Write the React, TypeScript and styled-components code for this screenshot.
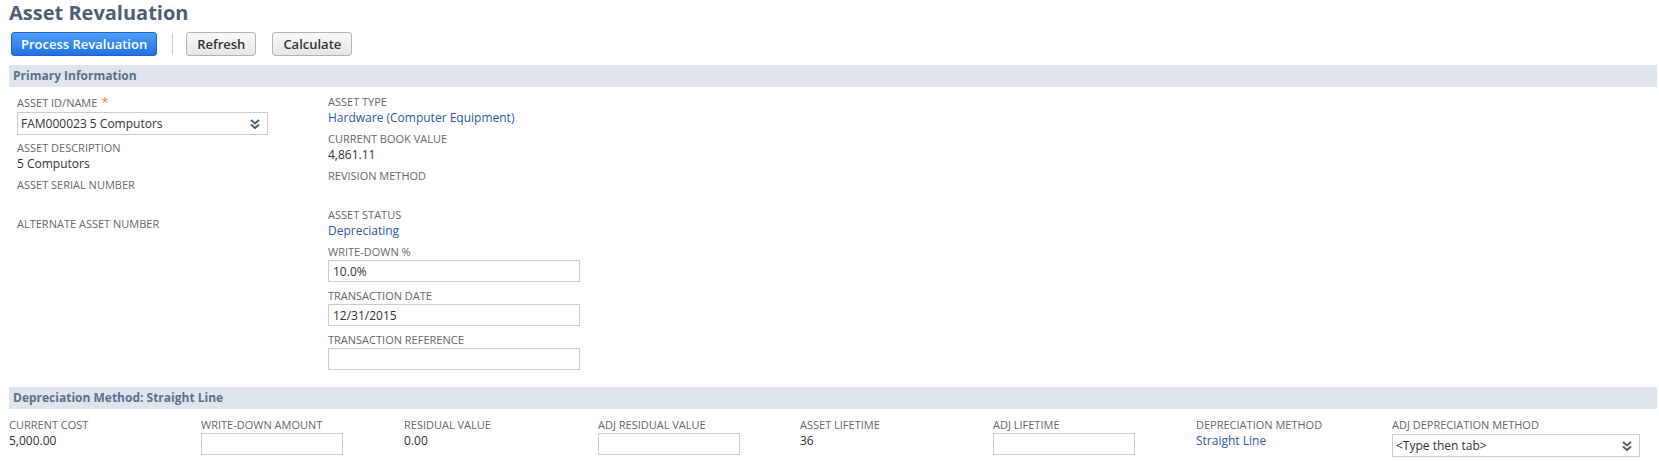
import React from 'react';
import styled, { createGlobalStyle } from 'styled-components';

const GlobalStyle = createGlobalStyle`
    body {
        margin: 0;
        background: #ffffff;
        font-family: "Open Sans", "DejaVu Sans", sans-serif;
        color: #333333;
    }
`;

const Page = styled.div`
    padding: 0 2px 0 9px;
`;

const Title = styled.h1`
    margin: 0;
    font-size: 20px;
    line-height: 26px;
    font-weight: 700;
    color: #4d5e77;
`;

const Toolbar = styled.div`
    display: flex;
    align-items: center;
    margin-top: 6px;
    height: 24px;
    padding-left: 2px;
`;

const Button = styled.button<{ primary?: boolean }>`
    height: 24px;
    padding: 0 ${props => (props.primary ? '9px' : '10px')};
    margin-right: ${props => (props.primary ? '15px' : '16px')};
    border-radius: 3px;
    font-family: "Open Sans", sans-serif;
    font-size: 13px;
    font-weight: 600;
    cursor: pointer;
    border: 1px solid ${props => (props.primary ? '#1b64cf' : '#b3b3b3')};
    color: ${props => (props.primary ? '#ffffff' : '#333333')};
    background: ${props =>
        props.primary
            ? 'linear-gradient(#4da0f7, #1f72e3)'
            : 'linear-gradient(#fafafa, #e5e5e5)'};
`;

const Separator = styled.span`
    width: 1px;
    height: 22px;
    background: #cccccc;
    margin-right: 13px;
`;

const SectionBar = styled.div<{ gap: number }>`
    margin-top: ${props => props.gap}px;
    height: 22px;
    line-height: 22px;
    background: #dfe5ef;
    padding-left: 4px;
    font-size: 12px;
    font-weight: 700;
    color: #5b6f8e;
`;

const PrimaryGrid = styled.div`
    display: grid;
    grid-template-columns: 311px 260px;
    padding: 7px 0 0 8px;
`;

const Column = styled.div`
    display: flex;
    flex-direction: column;
`;

const Field = styled.div<{ spaced?: boolean }>`
    margin-bottom: ${props => (props.spaced ? '6px' : '5px')};
`;

const Label = styled.div`
    font-size: 11px;
    line-height: 16px;
    color: #686868;
    white-space: nowrap;
`;

const Required = styled.span`
    color: #e8892e;
    font-size: 13px;
    margin-left: 4px;
`;

const Value = styled.div<{ link?: boolean }>`
    font-size: 12px;
    line-height: 16px;
    min-height: 18px;
    color: ${props => (props.link ? '#2a5aa6' : '#333333')};
    white-space: nowrap;
    &:not(:empty) {
        min-height: 16px;
    }
`;

const TextInput = styled.input<{ w: number }>`
    display: block;
    box-sizing: border-box;
    width: ${props => props.w}px;
    height: 22px;
    margin: 0;
    padding: 0 4px;
    border: 1px solid #cccccc;
    font-family: "Open Sans", sans-serif;
    font-size: 12px;
    color: #333333;
    outline: none;
`;

const SelectBox = styled.div<{ w: number }>`
    box-sizing: border-box;
    width: ${props => props.w}px;
    height: 23px;
    margin-top: 1px;
    border: 1px solid #cccccc;
    display: flex;
    align-items: center;
    justify-content: space-between;
    padding: 0 7px 0 3px;
    font-size: 12px;
    color: #333333;
`;

const BottomRow = styled.div`
    display: grid;
    grid-template-columns: 192px 203px 194px 202px 193px 203px 196px 260px;
    padding-top: 8px;
`;

const Chevrons = () => (
    <svg width="10" height="10" viewBox="0 0 10 10">
        <path d="M1 1 L5 4.5 L9 1" fill="none" stroke="#4e6079" strokeWidth="2" />
        <path d="M1 5.5 L5 9 L9 5.5" fill="none" stroke="#4e6079" strokeWidth="2" />
    </svg>
);

const depreciation = [
    { label: 'CURRENT COST', value: '5,000.00' },
    { label: 'WRITE-DOWN AMOUNT', input: true },
    { label: 'RESIDUAL VALUE', value: '0.00' },
    { label: 'ADJ RESIDUAL VALUE', input: true },
    { label: 'ASSET LIFETIME', value: '36' },
    { label: 'ADJ LIFETIME', input: true },
    { label: 'DEPRECIATION METHOD', value: 'Straight Line', link: true },
    { label: 'ADJ DEPRECIATION METHOD', select: '<Type then tab>' },
];

const App: React.FC = () => {
    return (
        <Page>
            <GlobalStyle />
            <Title>Asset Revaluation</Title>
            <Toolbar>
                <Button primary>Process Revaluation</Button>
                <Separator />
                <Button>Refresh</Button>
                <Button>Calculate</Button>
            </Toolbar>

            <SectionBar gap={9}>Primary Information</SectionBar>
            <PrimaryGrid>
                <Column>
                    <Field>
                        <Label>
                            ASSET ID/NAME<Required>*</Required>
                        </Label>
                        <SelectBox w={251}>
                            <span>FAM000023 5 Computors</span>
                            <Chevrons />
                        </SelectBox>
                    </Field>
                    <Field>
                        <Label>ASSET DESCRIPTION</Label>
                        <Value>5 Computors</Value>
                    </Field>
                    <Field>
                        <Label>ASSET SERIAL NUMBER</Label>
                        <Value />
                    </Field>
                    <Field>
                        <Label>ALTERNATE ASSET NUMBER</Label>
                    </Field>
                </Column>
                <Column>
                    <Field>
                        <Label>ASSET TYPE</Label>
                        <Value link>Hardware (Computer Equipment)</Value>
                    </Field>
                    <Field>
                        <Label>CURRENT BOOK VALUE</Label>
                        <Value>4,861.11</Value>
                    </Field>
                    <Field>
                        <Label>REVISION METHOD</Label>
                        <Value />
                    </Field>
                    <Field>
                        <Label>ASSET STATUS</Label>
                        <Value link>Depreciating</Value>
                    </Field>
                    <Field spaced>
                        <Label>WRITE-DOWN %</Label>
                        <TextInput w={252} defaultValue="10.0%" />
                    </Field>
                    <Field spaced>
                        <Label>TRANSACTION DATE</Label>
                        <TextInput w={252} defaultValue="12/31/2015" />
                    </Field>
                    <Field>
                        <Label>TRANSACTION REFERENCE</Label>
                        <TextInput w={252} />
                    </Field>
                </Column>
            </PrimaryGrid>

            <SectionBar gap={12}>Depreciation Method: Straight Line</SectionBar>
            <BottomRow>
                {depreciation.map(item => (
                    <Field key={item.label}>
                        <Label>{item.label}</Label>
                        {item.input && <TextInput w={142} />}
                        {item.select && (
                            <SelectBox w={248}>
                                <span>{item.select}</span>
                                <Chevrons />
                            </SelectBox>
                        )}
                        {item.value && <Value link={item.link}>{item.value}</Value>}
                    </Field>
                ))}
            </BottomRow>
        </Page>
    );
};

export default App;
